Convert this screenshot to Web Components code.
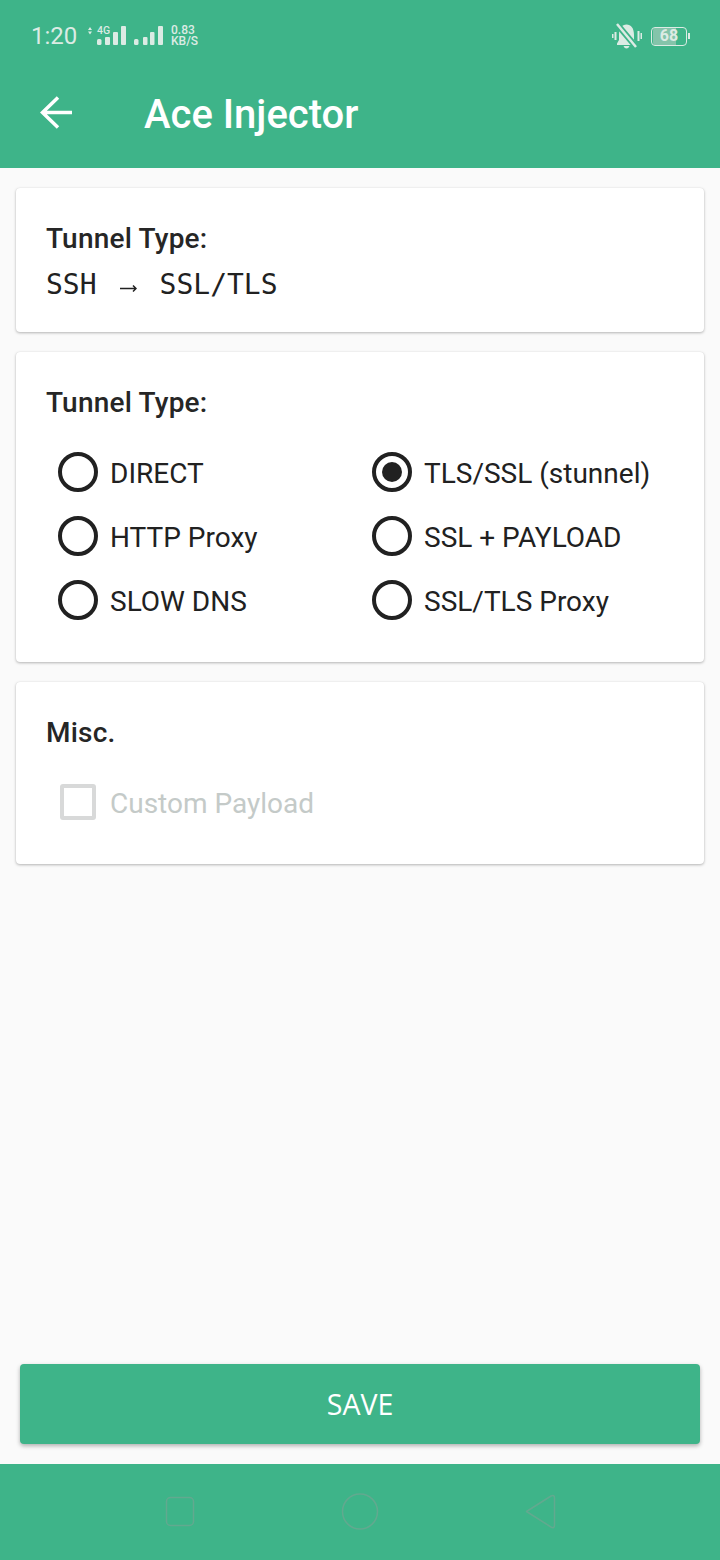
<!DOCTYPE html>
<html>
<head>
<meta charset="utf-8">
<title>Ace Injector</title>
<style>
  html, body { margin: 0; padding: 0; }
  body {
    width: 720px;
    height: 1560px;
    overflow: hidden;
    display: flex;
    flex-direction: column;
    background: #fafafa;
    font-family: Roboto, "Liberation Sans", sans-serif;
  }
  app-card { margin: 20px 16px 0; }
  .spacer { flex: 1; }
</style>
</head>
<body>
<app-header title="Ace Injector"></app-header>

<app-card heading="Tunnel Type:" style="height:144px">
  <tunnel-path from="SSH" to="SSL/TLS"></tunnel-path>
</app-card>

<app-card heading="Tunnel Type:" style="height:310px">
  <radio-grid>
    <radio-item label="DIRECT"></radio-item>
    <radio-item label="TLS/SSL (stunnel)" checked></radio-item>
    <radio-item label="HTTP Proxy"></radio-item>
    <radio-item label="SSL + PAYLOAD"></radio-item>
    <radio-item label="SLOW DNS"></radio-item>
    <radio-item label="SSL/TLS Proxy"></radio-item>
  </radio-grid>
</app-card>

<app-card heading="Misc." style="height:182px">
  <check-item label="Custom Payload"></check-item>
</app-card>

<div class="spacer"></div>
<save-button>SAVE</save-button>
<nav-bar></nav-bar>

<script>
class AppHeader extends HTMLElement {
  connectedCallback() {
    const shadow = this.attachShadow({ mode: 'open' });
    shadow.innerHTML = `
      <style>
        :host { display: block; height: 168px; background: #3eb489; color: #fff; flex: none; }
        .status {
          height: 72px;
          box-sizing: border-box;
          padding: 0 30px 0 31px;
          display: flex;
          align-items: center;
          color: #dcebe4;
        }
        .time { font-size: 24px; width: 53px; flex: none; }
        .bars { display: block; flex: none; }
        .speed { font-size: 12px; line-height: 11.500px; font-weight: 500; margin-left: 7px; }
        .grow { flex: 1; }
        .mute { display: block; margin-right: 9px; }
        .batt {
          width: 36px;
          height: 19px;
          box-sizing: border-box;
          border: 1.5px solid #dcebe4;
          border-radius: 4px;
          font-size: 16px;
          font-weight: 700;
          line-height: 16px;
          text-align: center;
          background: linear-gradient(90deg, #84c4aa 70%, transparent 70%);
          background-clip: content-box;
          padding: 0 1px;
        }
        .nub { width: 2px; height: 6px; background: #dcebe4; margin-left: 1px; }
        .bar {
          height: 96px;
          display: flex;
          align-items: center;
          padding-left: 40px;
          margin-top: -8px;
        }
        h1 { margin: 6px 0 0 71px; font-size: 40px; font-weight: 500; line-height: 46px; }
      </style>
      <div class="status">
        <span class="time">1:20</span>
        <svg class="bars" width="80" height="28" viewBox="0 0 80 28" fill="currentColor">
          <path d="M4 8 6 5 8 8zM4 9.500 6 12.500 8 9.500z"/>
          <text x="13" y="12" font-size="10.500" font-weight="500" font-family="Roboto, sans-serif">4G</text>
          <rect x="13" y="17" width="4.500" height="6" rx="1.500"/>
          <rect x="21" y="15" width="5" height="8" rx="1"/>
          <rect x="29" y="10" width="5" height="13" rx="1"/>
          <rect x="37" y="4" width="5" height="19" rx="1"/>
          <rect x="50" y="17" width="4.500" height="6" rx="1.500"/>
          <rect x="59" y="15" width="4.500" height="8" rx="1"/>
          <rect x="66" y="10" width="4.500" height="13" rx="1"/>
          <rect x="74" y="4" width="5" height="19" rx="1"/>
        </svg>
        <span class="speed">0.83<br>KB/S</span>
        <span class="grow"></span>
        <svg class="mute" width="30" height="26" viewBox="0 0 30 26">
          <path d="M7 12C7 5 10 1.500 14.500 1.500S22 5 22 12v5l2.500 3.500v1.500H5v-1.500L7 17z" fill="#dcebe4"/>
          <path d="M11.500 23h6q-1 2.500-3 2.500T11.500 23z" fill="#dcebe4"/>
          <path d="M4 0 25 25" stroke="#3eb489" stroke-width="6"/>
          <path d="M5 1 24 24" stroke="#dcebe4" stroke-width="2.500"/>
          <path d="M.500 11v4M3.500 9v8M26.500 8v10M29.500 10v6" stroke="#dcebe4" stroke-width="2" fill="none"/>
        </svg>
        <span class="batt">68</span><span class="nub"></span>
      </div>
      <div class="bar">
        <svg width="33" height="33" viewBox="0 0 33 33" fill="none" stroke="#fff" stroke-width="3.500">
          <path d="M32 16.500H3M18 1.500 2.500 16.500 18 31.500"/>
        </svg>
        <h1>${this.getAttribute('title')}</h1>
      </div>`;
  }
}

const cardTemplate = document.createElement('template');
cardTemplate.innerHTML = `
  <style>
    :host {
      display: block;
      flex: none;
      box-sizing: border-box;
      background: #fff;
      border-radius: 4px;
      box-shadow: 0 1px 3px rgba(0,0,0,.28), 0 0 1px rgba(0,0,0,.1);
      padding: 33px 30px 0;
    }
    h2 {
      margin: 0;
      font-size: 28px;
      letter-spacing: .2px;
      line-height: 36px;
      font-weight: 500;
      color: #262626;
    }
  </style>
  <h2></h2>
  <slot></slot>
`;

class AppCard extends HTMLElement {
  connectedCallback() {
    const shadow = this.attachShadow({ mode: 'open' });
    shadow.appendChild(cardTemplate.content.cloneNode(true));
    shadow.querySelector('h2').textContent = this.getAttribute('heading');
  }
}

class TunnelPath extends HTMLElement {
  connectedCallback() {
    const shadow = this.attachShadow({ mode: 'open' });
    shadow.innerHTML = `
      <style>
        :host {
          display: flex;
          align-items: center;
          height: 38px;
          margin-top: 8px;
          font-family: "DejaVu Sans Mono", monospace;
          font-size: 28px;
          color: #212121;
        }
        svg { margin: 8px 23px 0 23px; }
      </style>
      <span>${this.getAttribute('from')}</span>
      <svg width="17" height="9" viewBox="0 0 17 9" fill="none" stroke="#212121" stroke-width="1.500">
        <path d="M0 4.500H16M13 1.500 16 4.500 13 7.500"/>
      </svg>
      <span>${this.getAttribute('to')}</span>`;
  }
}

class RadioGrid extends HTMLElement {
  connectedCallback() {
    const shadow = this.attachShadow({ mode: 'open' });
    shadow.innerHTML = `
      <style>
        :host {
          display: grid;
          grid-template-columns: 314px 1fr;
          grid-auto-rows: 64px;
          margin: 19px 0 0 12px;
        }
      </style>
      <slot></slot>`;
  }
}

class RadioItem extends HTMLElement {
  connectedCallback() {
    const shadow = this.attachShadow({ mode: 'open' });
    shadow.innerHTML = `
      <style>
        :host {
          display: flex;
          align-items: center;
          font-size: 28px;
          color: #212121;
        }
        .dot {
          width: 40px;
          height: 40px;
          box-sizing: border-box;
          border: 4px solid #212121;
          border-radius: 50%;
          margin-right: 12px;
          flex: none;
          display: flex;
          align-items: center;
          justify-content: center;
        }
        .dot i { width: 20px; height: 20px; border-radius: 50%; background: #212121; }
        .text { padding-top: 2px; }
      </style>
      <span class="dot">${this.hasAttribute('checked') ? '<i></i>' : ''}</span>
      <span class="text">${this.getAttribute('label')}</span>`;
  }
}

class CheckItem extends HTMLElement {
  connectedCallback() {
    const shadow = this.attachShadow({ mode: 'open' });
    shadow.innerHTML = `
      <style>
        :host {
          display: flex;
          align-items: center;
          height: 64px;
          margin: 19px 0 0 14px;
          font-size: 28px;
          color: #c4cac8;
        }
        .box {
          width: 36px;
          height: 36px;
          box-sizing: border-box;
          border: 4px solid #d8d9d9;
          border-radius: 3px;
          margin-right: 14px;
        }
        .text { padding-top: 2px; }
      </style>
      <span class="box"></span>
      <span class="text">${this.getAttribute('label')}</span>`;
  }
}

class SaveButton extends HTMLElement {
  connectedCallback() {
    const shadow = this.attachShadow({ mode: 'open' });
    shadow.innerHTML = `
      <style>
        :host {
          display: flex;
          flex: none;
          align-items: center;
          justify-content: center;
          height: 80px;
          margin: 0 20px 20px;
          background: #3eb489;
          color: #fff;
          border-radius: 4px;
          font-family: "Open Sans", sans-serif;
          font-size: 28.500px;
          box-shadow: 0 2px 4px rgba(0,0,0,.3);
        }
      </style>
      <slot></slot>`;
  }
}

class NavBar extends HTMLElement {
  connectedCallback() {
    const shadow = this.attachShadow({ mode: 'open' });
    shadow.innerHTML = `
      <style>
        :host { display: block; flex: none; height: 96px; background: #3eb489; }
        svg { display: block; }
      </style>
      <svg width="720" height="96" viewBox="0 0 720 96" fill="none" stroke="#62a98f" stroke-width="1.500">
        <rect x="166.500" y="33.500" width="27" height="28" rx="4"/>
        <circle cx="360" cy="47.500" r="17.500"/>
        <path d="M526.500 47.500 551 32Q554.500 30.500 554.500 34V61Q554.500 65 551 63z" stroke-linejoin="round"/>
      </svg>`;
  }
}

customElements.define('app-header', AppHeader);
customElements.define('app-card', AppCard);
customElements.define('tunnel-path', TunnelPath);
customElements.define('radio-grid', RadioGrid);
customElements.define('radio-item', RadioItem);
customElements.define('check-item', CheckItem);
customElements.define('save-button', SaveButton);
customElements.define('nav-bar', NavBar);
</script>
</body>
</html>
